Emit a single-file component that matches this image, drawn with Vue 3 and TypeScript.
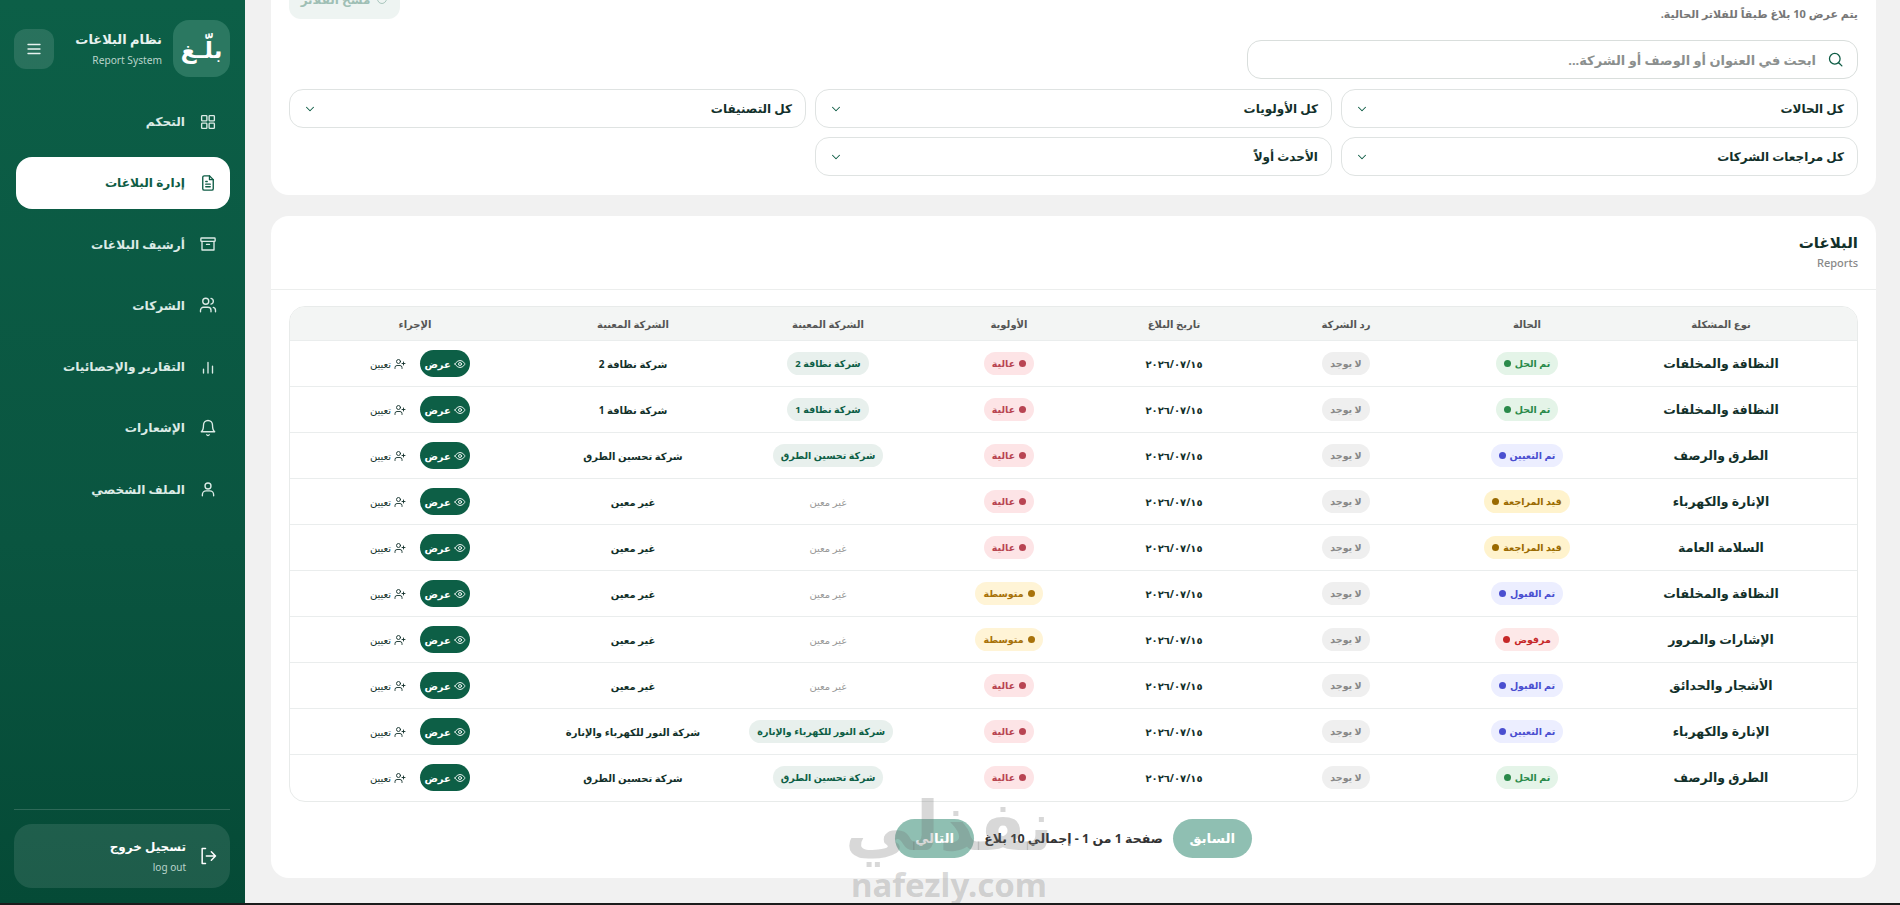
<template>
  <div class="shell">
    <aside class="sidebar" dir="rtl">
      <div class="brand">
        <div class="logo">بلّـغ</div>
        <div class="brand-text">
          <div class="brand-title">نظام البلاغات</div>
          <div class="brand-sub">Report System</div>
        </div>
        <button class="burger" aria-label="menu">
          <svg viewBox="0 0 24 24" width="18" height="18"><path d="M4 6h16M4 12h16M4 18h16" /></svg>
        </button>
      </div>

      <nav class="nav">
        <a v-for="item in navItems" :key="item.label" class="nav-item" :class="{ active: item.active }">
          <svg viewBox="0 0 24 24" width="18" height="18" v-html="item.icon"></svg>
          <span>{{ item.label }}</span>
        </a>
      </nav>

      <div class="side-foot">
        <div class="logout">
          <svg viewBox="0 0 24 24" width="20" height="20">
            <path d="M9 3H5v18h4" />
            <path d="M10 12h11M16 7l5 5-5 5" />
          </svg>
          <div>
            <div class="logout-title">تسجيل خروج</div>
            <div class="logout-sub">log out</div>
          </div>
        </div>
      </div>
    </aside>

    <main class="main" dir="rtl">
      <section class="card filters">
        <div class="filters-top">
          <p class="result-note">يتم عرض 10 بلاغ طبقاً للفلاتر الحالية.</p>
          <button class="clear-btn">
            <svg viewBox="0 0 24 24" width="12" height="12"><path d="M21 12a9 9 0 1 1-3-6.7L21 8M21 3v5h-5" /></svg>
            مسح الفلاتر
          </button>
        </div>
        <label class="search">
          <svg viewBox="0 0 24 24" width="17" height="17"><circle cx="11" cy="11" r="7.5" /><path d="m21 21-4.5-4.5" /></svg>
          <input type="text" placeholder="ابحث في العنوان أو الوصف أو الشركة..." />
        </label>
        <div class="select-grid">
          <div v-for="s in selects" :key="s" class="select">
            <span>{{ s }}</span>
            <svg viewBox="0 0 24 24" width="14" height="14"><path d="m6 9 6 6 6-6" /></svg>
          </div>
        </div>
      </section>

      <section class="card reports">
        <header class="reports-head">
          <h2>البلاغات</h2>
          <p>Reports</p>
        </header>
        <div class="table-wrap">
          <table>
            <colgroup>
              <col v-for="w in colWidths" :key="w.k" :style="{ width: w.v + 'px' }" />
            </colgroup>
            <thead>
              <tr>
                <th v-for="h in headers" :key="h">{{ h }}</th>
              </tr>
            </thead>
            <tbody>
              <tr v-for="(r, i) in rows" :key="i">
                <td class="type">{{ r.type }}</td>
                <td><span class="pill" :class="r.status[1]">{{ r.status[0] }}<i></i></span></td>
                <td><span class="pill none">لا يوجد</span></td>
                <td class="date">٢٠٢٦/٠٧/١٥</td>
                <td><span class="pill" :class="r.high ? 'high' : 'medium'"><i></i>{{ r.high ? 'عالية' : 'متوسطة' }}</span></td>
                <td>
                  <span v-if="r.company" class="pill company">{{ r.company }}</span>
                  <span v-else class="muted">غير معين</span>
                </td>
                <td class="company-name">{{ r.company || 'غير معين' }}</td>
                <td class="actions-cell">
                  <div class="actions">
                    <button class="view">
                      <svg viewBox="0 0 24 24" width="12" height="12"><path d="M2 12s3.6-7 10-7 10 7 10 7-3.6 7-10 7-10-7-10-7Z" /><circle cx="12" cy="12" r="3" /></svg>
                      عرض
                    </button>
                    <button class="assign">
                      <svg viewBox="0 0 24 24" width="12" height="12"><path d="M16 21v-2a4 4 0 0 0-4-4H6a4 4 0 0 0-4 4v2" /><circle cx="9" cy="7" r="4" /><path d="M19 8v6M22 11h-6" /></svg>
                      تعيين
                    </button>
                  </div>
                </td>
              </tr>
            </tbody>
          </table>
        </div>
        <div class="pager">
          <button>السابق</button>
          <span>صفحة 1 من 1 - إجمالي 10 بلاغ</span>
          <button>التالي</button>
        </div>
      </section>

      <div class="watermark" aria-hidden="true">
        <div class="wm-ar">نفذلي</div>
        <div class="wm-en">nafezly.com</div>
      </div>
    </main>
    <div class="edge"></div>
  </div>
</template>

<script setup lang="ts">
const navItems = [
  { label: 'التحكم', icon: '<rect x="3.5" y="3.5" width="7" height="7" rx="1"/><rect x="13.5" y="3.5" width="7" height="7" rx="1"/><rect x="3.5" y="13.5" width="7" height="7" rx="1"/><rect x="13.5" y="13.5" width="7" height="7" rx="1"/>' },
  { label: 'إدارة البلاغات', active: true, icon: '<path d="M14 2.5H7a2 2 0 0 0-2 2v15a2 2 0 0 0 2 2h10a2 2 0 0 0 2-2v-12Z"/><path d="M14 2.5v5h5M9 10h2M9 13.5h6M9 17h6"/>' },
  { label: 'أرشيف البلاغات', icon: '<rect x="2.5" y="4" width="19" height="4.5" rx="1"/><path d="M4 8.5V20h16V8.5M10 12.5h4"/>' },
  { label: 'الشركات', icon: '<path d="M16 21v-2a4 4 0 0 0-4-4H6a4 4 0 0 0-4 4v2"/><circle cx="9" cy="7" r="4"/><path d="M22 21v-2a4 4 0 0 0-3-3.9M16 3.1a4 4 0 0 1 0 7.8"/>' },
  { label: 'التقارير والإحصائيات', icon: '<path d="M6 20v-5M12 20V6M18 20v-9"/>' },
  { label: 'الإشعارات', icon: '<path d="M6 8a6 6 0 0 1 12 0c0 7 3 9 3 9H3s3-2 3-9"/><path d="M10.3 21a2 2 0 0 0 3.4 0"/>' },
  { label: 'الملف الشخصي', icon: '<circle cx="12" cy="8" r="4"/><path d="M4.5 21v-1.5a5 5 0 0 1 5-5h5a5 5 0 0 1 5 5V21"/>' }
]

const selects = ['كل الحالات', 'كل الأولويات', 'كل التصنيفات', 'كل مراجعات الشركات', 'الأحدث أولاً']

const headers = ['نوع المشكلة', 'الحالة', 'رد الشركة', 'تاريخ البلاغ', 'الأولوية', 'الشركة المعينة', 'الشركة المعنية', 'الإجراء']

const colWidths = [272, 116, 246, 98, 232, 130, 260, 215].map((v, k) => ({ k, v }))

const done: [string, string] = ['تم الحل', 'done']
const assigned: [string, string] = ['تم التعيين', 'blue']
const review: [string, string] = ['قيد المراجعة', 'review']
const accepted: [string, string] = ['تم القبول', 'blue']
const rejected: [string, string] = ['مرفوض', 'rejected']

const rows = [
  { type: 'النظافة والمخلفات', status: done, high: true, company: 'شركة نظافة 2' },
  { type: 'النظافة والمخلفات', status: done, high: true, company: 'شركة نظافة 1' },
  { type: 'الطرق والرصف', status: assigned, high: true, company: 'شركة تحسين الطرق' },
  { type: 'الإنارة والكهرباء', status: review, high: true, company: '' },
  { type: 'السلامة العامة', status: review, high: true, company: '' },
  { type: 'النظافة والمخلفات', status: accepted, high: false, company: '' },
  { type: 'الإشارات والمرور', status: rejected, high: false, company: '' },
  { type: 'الأشجار والحدائق', status: accepted, high: true, company: '' },
  { type: 'الإنارة والكهرباء', status: assigned, high: true, company: 'شركة النور للكهرباء والإنارة' },
  { type: 'الطرق والرصف', status: done, high: true, company: 'شركة تحسين الطرق' }
]
</script>

<style>
html, body {
  margin: 0;
  height: 100%;
  overflow: hidden;
}
</style>

<style scoped>
.shell {
  position: relative;
  display: flex;
  height: 905px;
  overflow: hidden;
  font-family: "Noto Sans", "DejaVu Sans", sans-serif;
  background: #f1f1f1;
}

svg {
  fill: none;
  stroke: currentColor;
  stroke-width: 1.8;
  stroke-linecap: round;
  stroke-linejoin: round;
  flex-shrink: 0;
}

button {
  font-family: inherit;
  border: 0;
  cursor: pointer;
}

.sidebar {
  width: 245px;
  flex-shrink: 0;
  display: flex;
  flex-direction: column;
  background: linear-gradient(180deg, #0c5f47 0%, #0a5540 60%, #054a36 100%);
  color: #dcebe6;
  box-sizing: border-box;
  padding: 20px 15px 17px 14px;
}

.brand {
  display: flex;
  align-items: center;
  gap: 11px;
}

.logo {
  width: 57px;
  height: 57px;
  border-radius: 16px;
  background: #2b7861;
  color: #fff;
  font-size: 23px;
  font-weight: 700;
  display: flex;
  align-items: center;
  justify-content: center;
}

.brand-text {
  flex: 1;
}

.brand-title {
  font-size: 13px;
  font-weight: 700;
  color: #e8f2ef;
  line-height: 22px;
}

.brand-sub {
  font-size: 10.2px;
  color: #b9d4cb;
  line-height: 18px;
  margin-top: 1px;
}

.burger {
  width: 40px;
  height: 40px;
  border-radius: 12px;
  background: rgba(255, 255, 255, 0.12);
  color: #e8f2ef;
  display: flex;
  align-items: center;
  justify-content: center;
  padding: 0;
}

.nav {
  display: flex;
  flex-direction: column;
  gap: 9.3px;
  margin-top: 18.5px;
}

.nav-item {
  height: 52px;
  border-radius: 16px;
  display: flex;
  align-items: center;
  gap: 14px;
  padding: 0 13px;
  margin-left: 2px;
  font-size: 12.2px;
  font-weight: 700;
}

.nav-item.active {
  background: #fff;
  color: #0e5c45;
}

.side-foot {
  margin-top: auto;
  border-top: 1px solid rgba(255, 255, 255, 0.16);
  padding-top: 14px;
}

.logout {
  height: 64px;
  border-radius: 18px;
  background: rgba(255, 255, 255, 0.1);
  display: flex;
  align-items: center;
  gap: 12px;
  padding: 0 12px;
  color: #fff;
}

.logout-title {
  font-size: 12px;
  font-weight: 700;
  line-height: 22px;
}

.logout-sub {
  font-size: 10px;
  color: #b9d4cb;
  line-height: 18px;
}

.main {
  flex: 1;
  min-width: 0;
  padding: 0 24px 0 26px;
  position: relative;
}

.card {
  background: #fff;
  border-radius: 18px;
  box-sizing: border-box;
}

.filters {
  margin-top: -60px;
  padding: 18px 18px 19px;
  height: 255px;
}

.filters-top {
  display: flex;
  justify-content: space-between;
  align-items: flex-end;
  height: 64px;
}

.result-note {
  margin: 0;
  font-size: 11px;
  font-weight: 700;
  color: #777;
  line-height: 18px;
  position: relative;
  top: 1px;
}

.clear-btn {
  width: 111px;
  height: 40px;
  margin-bottom: 3px;
  border-radius: 12px;
  background: #eef4f2;
  color: #9fbfb5;
  font-size: 12px;
  font-weight: 700;
  display: flex;
  align-items: center;
  justify-content: center;
  gap: 6px;
}

.search {
  margin-top: 18px;
  width: 611px;
  height: 39px;
  border: 1px solid #d9dedc;
  border-radius: 14px;
  box-sizing: border-box;
  display: flex;
  align-items: center;
  gap: 9px;
  padding: 0 13px;
  color: #0e5c45;
}

.search input {
  flex: 1;
  border: 0;
  outline: 0;
  background: none;
  font-family: inherit;
  font-size: 13px;
  font-weight: 700;
}

.search input::placeholder {
  color: #8b8f8e;
}

.select-grid {
  display: grid;
  grid-template-columns: repeat(3, 1fr);
  gap: 9px;
  margin-top: 10px;
}

.select {
  height: 39px;
  box-sizing: border-box;
  border: 1px solid #dfe3e2;
  border-radius: 14px;
  display: flex;
  align-items: center;
  justify-content: space-between;
  padding: 0 13px;
  font-size: 12px;
  font-weight: 700;
  color: #12302a;
}

.select svg {
  color: #0e5c45;
}

.reports {
  margin-top: 21px;
  height: 662px;
  padding-bottom: 21px;
}

.reports-head {
  height: 74px;
  box-sizing: border-box;
  border-bottom: 1px solid #eceeed;
  padding: 14px 18px 0;
}

.reports-head h2 {
  margin: 0;
  font-size: 15px;
  line-height: 24px;
  font-weight: 700;
  color: #12302a;
}

.reports-head p {
  margin: 1px 0 0;
  font-size: 11px;
  line-height: 16px;
  font-weight: 500;
  color: #888;
}

.table-wrap {
  margin: 16px 18px 0;
  border: 1px solid #e8ebea;
  border-radius: 16px;
  overflow: hidden;
}

table {
  width: 100%;
  table-layout: fixed;
  border-collapse: collapse;
}

th {
  height: 33px;
  background: #f3f5f4;
  font-size: 10px;
  font-weight: 700;
  color: #555;
  padding: 0;
  white-space: nowrap;
}

th:last-child,
.actions-cell {
  padding-left: 39px;
}

td {
  height: 46px;
  box-sizing: border-box;
  padding: 0;
  text-align: center;
  border-top: 1px solid #eaeded;
  font-size: 10px;
  color: #12302a;
  white-space: nowrap;
}

.type {
  font-size: 12.5px;
  font-weight: 700;
}

.company-name,
.date {
  font-weight: 700;
}

.pill {
  display: inline-flex;
  align-items: center;
  gap: 4px;
  height: 23px;
  padding: 0 8px;
  border-radius: 999px;
  font-size: 9.5px;
  font-weight: 700;
}

.pill i {
  width: 7px;
  height: 7px;
  border-radius: 50%;
  background: currentColor;
}

.done {
  background: #e4f4e8;
  color: #2a8a4a;
}

.blue {
  background: #eceeff;
  color: #4a4fd0;
}

.review {
  background: #fff3cd;
  color: #9a6a00;
}

.rejected {
  background: #fde8e8;
  color: #c62828;
}

.high {
  background: #fde4e6;
  color: #b84452;
}

.medium {
  background: #fff4d6;
  color: #a8720a;
}

.company {
  background: #e8f0ed;
  color: #0d5f46;
}

.none {
  background: #efefef;
  color: #888;
}

.muted {
  color: #999;
  font-weight: 500;
}

.actions {
  display: flex;
  align-items: center;
  justify-content: center;
  gap: 14px;
  margin-left: 10px;
}

.view {
  height: 27px;
  width: 50px;
  border-radius: 999px;
  background: #0d5f46;
  color: #fff;
  font-size: 10px;
  font-weight: 700;
  display: flex;
  align-items: center;
  justify-content: center;
  gap: 3px;
  padding: 0;
}

.assign {
  background: none;
  color: #12302a;
  font-size: 10px;
  font-weight: 500;
  display: flex;
  align-items: center;
  gap: 3px;
  padding: 0;
}

.pager {
  display: flex;
  align-items: center;
  justify-content: center;
  gap: 10px;
  margin-top: 17px;
  font-size: 12.5px;
  font-weight: 700;
  color: #333;
}

.pager button {
  width: 79px;
  height: 39px;
  border-radius: 20px;
  background: #8fbfb2;
  color: #fff;
  font-size: 13.5px;
  font-weight: 700;
  padding: 0;
}

.watermark {
  position: absolute;
  left: 598px;
  top: 778px;
  width: 212px;
  text-align: center;
  color: rgba(110, 110, 110, 0.27);
  pointer-events: none;
}

.wm-ar {
  font-size: 68px;
  font-weight: 700;
  line-height: 92px;
}

.wm-en {
  font-size: 33px;
  font-weight: 700;
  line-height: 30px;
  direction: ltr;
}

.edge {
  position: absolute;
  left: 0;
  right: 0;
  bottom: 0;
  height: 2px;
  background: #1c1c1c;
}
</style>
